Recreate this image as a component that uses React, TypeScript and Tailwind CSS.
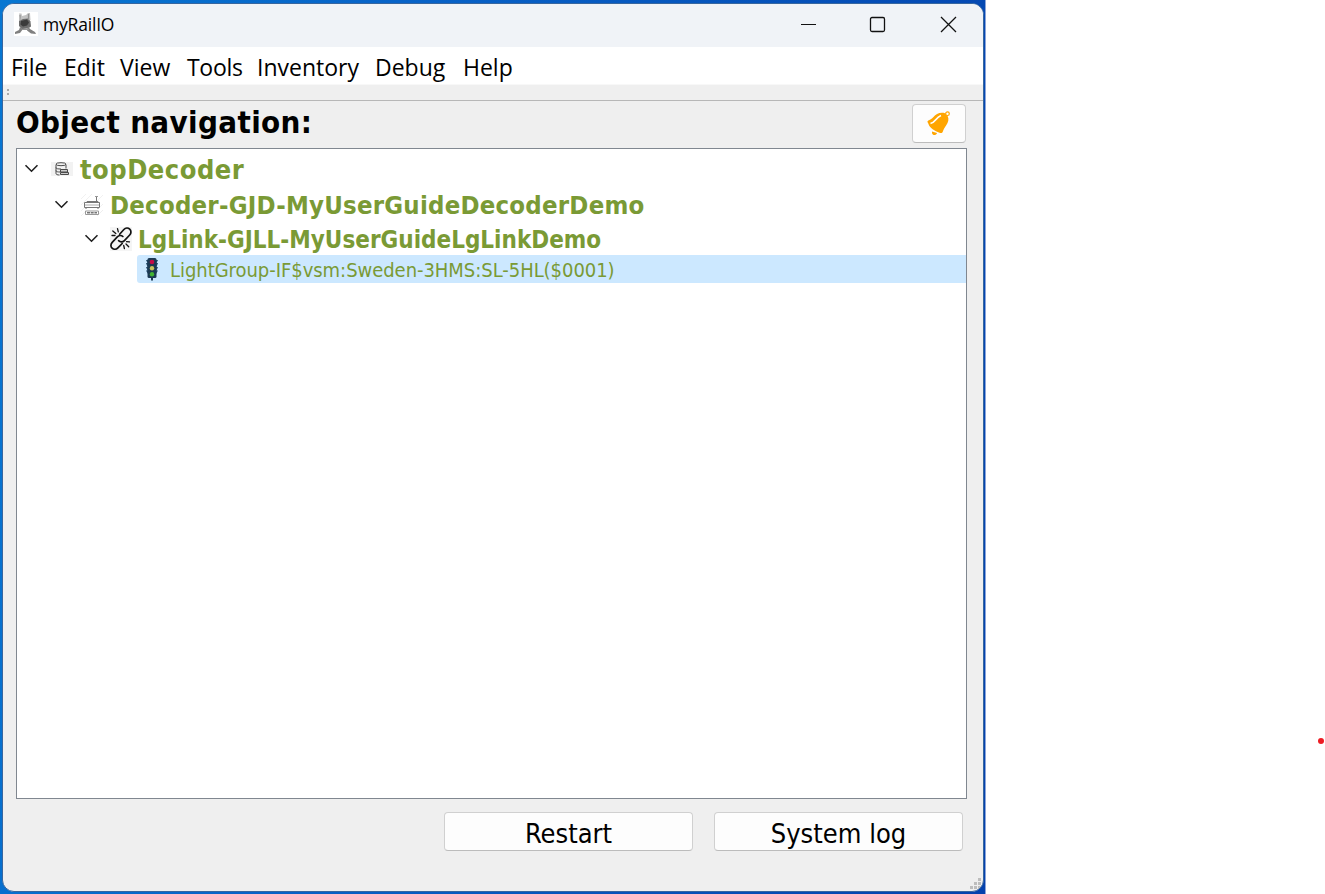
import React from "react";

const ui = "font-['Open_Sans',sans-serif]";
const dialog = "font-['DejaVu_Sans_Condensed','DejaVu_Sans',sans-serif] [font-stretch:condensed]";

function Chevron() {
  return (
    <svg className="mb-[2px] h-[14px] w-[15px] shrink-0" viewBox="0 0 15 14" fill="none" stroke="#222" strokeWidth="1.6">
      <path d="M1.500 4.200 7.500 10.200 13.500 4.200" />
    </svg>
  );
}

function AppIcon() {
  return (
    <svg className="block h-6 w-6 bg-white" viewBox="0 0 24 24">
      <path d="M5 1.500h2.500L8 4l4-1 2-2h2l.5 7-2 2H7Z" fill="#c2c2c2" />
      <path d="m5 9 4-2 5-.5 2.500 3 .5 5-3 2-6 .5-3-3Z" fill="#6c6c6c" />
      <path d="m6 15 3 2-3 4-5 1v-2l4-2Zm8-1 2 3 5 3 1 2-5-.5-4-3Z" fill="#808080" />
      <path d="M6 3v6M14.500 2v6M8 17.500h7" stroke="#929292" strokeWidth="1.200" />
      <path d="m7 9 6-1.500 2 3-2 3-4 1-2.500-2Z" fill="#3b3b3b" />
    </svg>
  );
}

function DatabaseIcon() {
  return (
    <svg className="block h-[14px] w-[22px] bg-[#f2f2f2]" viewBox="0 0 22 14" fill="none" stroke="#4b4b4b" strokeWidth="1">
      <ellipse cx="10" cy="2.200" rx="5" ry="1.500" />
      <path d="M5 2.500v9c0 1 1.500 1.500 3.500 1.500M15 2.500v4M5 5.500c0 1.300 2 1.500 5 1.500M5 8.500c0 1.300 2 1.500 4 1.500" />
      <path d="M9.500 7.500h7v2.500h-7zM9.500 10.500h8v2h-8z" fill="#ccc" />
    </svg>
  );
}

function DecoderIcon() {
  return (
    <svg className="block h-6 w-6" viewBox="0 0 24 24" fill="none">
      <path d="M1 6 6 1M1 12 12 1M1 18 5 14M1 23 5 19M17 8l6-6M20 14l3-3M20 20l3-3M17 23l6-6" stroke="#eeeeee" strokeWidth=".8" />
      <path d="M6 9.500 7 8.500h11l1 1M4.500 9.500h15v5h-15zM16.500 3v5.500M6 14.500v1.500M18 14.500v1.500" stroke="#777" />
      <path d="M5 12h14" stroke="#aaa" />
      <path d="M15 3.500h3M5.500 18h13v3.500h-13z" stroke="#999" />
      <path d="M7 19.700h10" stroke="#777" strokeWidth="1.500" strokeDasharray="3 .7" />
    </svg>
  );
}

function BrokenLinkIcon() {
  return (
    <svg className="-ml-[2px] block h-6 w-[22px] bg-[#f5f5f5]" viewBox="0 0 22 24" fill="none" stroke="#111" strokeWidth="1.700" strokeLinecap="round">
      <path d="m9.600 7.200 4.300-4.700c1.700-1.800 4.200-1.900 5.800-.4s1.700 4.100 0 5.900l-5.300 5.600c-1.600 1.700-4.300 1.700-5.800.1" />
      <path d="m12.200 16.500-4.300 4.400c-1.700 1.700-4.200 1.800-5.800.3S.5 17.200 2.200 15.400l5.100-5.500c1.600-1.700 4.100-1.800 5.600-.4" />
      <path d="m2.800 3.900 3 2.700M7.500 1.700l.8 3.200M2 8.500h3M13.700 18.500l.7 3M16 17l2.700 2.700M16.500 14.700l3 .2" strokeWidth="1.300" />
    </svg>
  );
}

function SignalIcon() {
  return (
    <svg className="block h-6 w-6" viewBox="0 0 24 24">
      <path d="M6 3h12l-1.500 3H18l-1.500 4H18l-1.500 3.500H18L16 17H8l-2-3.500h1.500L6 10h1.500L6 6h1.500Z" fill="#1f4768" />
      <rect x="7.500" y="1" width="9" height="20" rx="1.500" fill="#1b3953" />
      <path d="M12 21v2.500" stroke="#1b3953" strokeWidth="2" />
      <circle cx="12" cy="5" r="2.300" fill="#c40b48" />
      <circle cx="12" cy="11.200" r="2.200" fill="#c9c45c" />
      <circle cx="12" cy="17.300" r="2.200" fill="#42b532" />
    </svg>
  );
}

function BellIcon() {
  return (
    <svg className="block h-6 w-6" viewBox="0 0 24 24">
      <path d="M.5 11C.2 9.200 3 9.500 6 6.500 9 3 13 .8 18 2.200l2 1.500c1.500 2.500 2 5 .5 8.300-1 2.500-3.500 4.500-4.500 8-.5 2-1.500 2.500-3.500 1.700C8 20 2.500 17 1.500 13Z" fill="orange" />
      <path d="M3.500 12.300c5-.3 5-5.800 10.500-7.800" stroke="white" strokeWidth="1.700" fill="none" />
      <circle cx="20.500" cy="2.700" r="1.800" fill="white" stroke="orange" strokeWidth="1.200" />
      <path d="M5 20.500 10 22c-.5 2.500-4.500 3-5 0Z" fill="orange" />
    </svg>
  );
}

function SizeGrip() {
  return (
    <svg className="h-3 w-3" viewBox="0 0 12 12" fill="#bdbdbd">
      <path d="M8 1h3v3H8zM4 5h3v3H4zM8 5h3v3H8zM0 9h3v3H0zM4 9h3v3H4zM8 9h3v3H8z" />
    </svg>
  );
}

const menus = [
  { label: "File", cls: "w-[53px]" },
  { label: "Edit", cls: "w-14" },
  { label: "View", cls: "w-[67px]" },
  { label: "Tools", cls: "w-[70px] tracking-[-0.300px]" },
  { label: "Inventory", cls: "w-[118px]" },
  { label: "Debug", cls: "w-[88px]" },
  { label: "Help", cls: "w-[60px]" },
];

const rows = [
  { label: "topDecoder", icon: <DatabaseIcon />, row: "h-[39px] pl-[7px]", text: "pl-[3px] pt-[2px] text-[27px] tracking-[0.500px] font-bold" },
  { label: "Decoder-GJD-MyUserGuideDecoderDemo", icon: <DecoderIcon />, row: "h-[34px] pl-[37px]", text: "pl-[3px] pt-[2px] text-[25.500px] tracking-[0.230px] font-bold" },
  { label: "LgLink-GJLL-MyUserGuideLgLinkDemo", icon: <BrokenLinkIcon />, row: "h-[33px] pl-[67px]", text: "pl-[1px] pt-[2px] text-[24px] font-bold" },
];

export default function App() {
  return (
    <div className="flex h-[894px] w-[1325px] overflow-hidden bg-white text-black">
      <div className="w-[986px] border-r border-[#8ca5d8] bg-[linear-gradient(100deg,#0877d2_0%,#0763c8_35%,#0442ad_100%)] pt-[3px] pl-[2px]">
        <div className="flex h-[889px] w-[982px] flex-col overflow-hidden rounded-[12px] border border-[#37669f] bg-[#efefef]">
          <header className={`flex h-[43px] shrink-0 items-center bg-[#f0f3f7] pb-[3px] pl-[11px] ${ui}`}>
            <AppIcon />
            <span className="ml-[5px] text-[17.500px] tracking-[-0.200px]">myRailIO</span>
            <svg className="mr-[25px] ml-auto h-5 w-[158px]" viewBox="0 0 158 20" fill="none" stroke="#111">
              <path d="M1 10.500h15" />
              <rect x="70.500" y="3.500" width="14" height="14" rx="1.500" strokeWidth="1.300" />
              <path d="m141 3 15 15m0-15-15 15" strokeWidth="1.300" />
            </svg>
          </header>
          <nav className={`flex h-[37px] shrink-0 items-center bg-white pt-[2px] pl-2 text-[23px] ${ui}`}>
            {menus.map((m) => (
              <span key={m.label} className={`${m.cls} shrink-0 leading-[40px] whitespace-nowrap`}>{m.label}</span>
            ))}
          </nav>
          <div className="flex h-[17px] shrink-0 items-center border-t border-b border-t-[#f8f8f8] border-b-[#b7b7b7] bg-[#efefef] pl-[3px]">
            <svg className="h-2 w-1" viewBox="0 0 4 8" fill="#aaa"><path d="M1 0h2v2H1zM1 4h2v2H1z" /></svg>
          </div>
          <main className={`flex min-h-0 flex-1 flex-col pr-4 pl-[13px] ${dialog}`}>
            <div className="flex h-[47px] shrink-0 items-start justify-between">
              <h1 className="text-[31px] leading-[42px] font-bold tracking-[0.350px]">Object navigation:</h1>
              <button aria-label="Notifications" className="mt-[3px] mr-[1px] flex h-[39px] w-[54px] items-center justify-center rounded-[4px] border border-[#d0d0d0] border-b-[#bcbcbc] bg-[#fdfdfd] pb-[2px]">
                <BellIcon />
              </button>
            </div>
            <div className="h-[651px] w-[951px] shrink-0 border border-[#808790] bg-white text-[#7a9a35]">
              {rows.map((r) => (
                <div key={r.label} className={`flex items-center ${r.row}`}>
                  <Chevron />
                  <div className="flex w-[38px] shrink-0 justify-center pl-[8px]">{r.icon}</div>
                  <span className={`leading-none whitespace-nowrap ${r.text}`}>{r.label}</span>
                </div>
              ))}
              <div className="ml-[120px] flex h-7 items-center rounded-l-[3px] bg-[#cce8ff] pl-[3px]">
                <SignalIcon />
                <span className="ml-[6px] pt-[2px] text-[20px] leading-none tracking-[-0.040px] whitespace-nowrap">LightGroup-IF$vsm:Sweden-3HMS:SL-5HL($0001)</span>
              </div>
            </div>
            <div className="mt-[13px] flex h-[39px] shrink-0 justify-end gap-[21px] pr-1 text-[27px] leading-none">
              <button className="flex w-[249px] items-center justify-center rounded-[4px] border border-[#d0d0d0] border-b-[#bcbcbc] bg-[#fdfdfd] pt-[3px]">Restart</button>
              <button className="flex w-[249px] items-center justify-center rounded-[4px] border border-[#d0d0d0] border-b-[#bcbcbc] bg-[#fdfdfd] pt-[3px]">System log</button>
            </div>
          </main>
          <footer className="flex h-[14px] shrink-0 justify-end pr-[1px]"><SizeGrip /></footer>
        </div>
      </div>
      <div className="flex flex-1 items-end justify-end pr-[1px] pb-[150px]">
        <span className="h-[6px] w-[6px] rounded-full bg-[#ed1c24]" />
      </div>
    </div>
  );
}
